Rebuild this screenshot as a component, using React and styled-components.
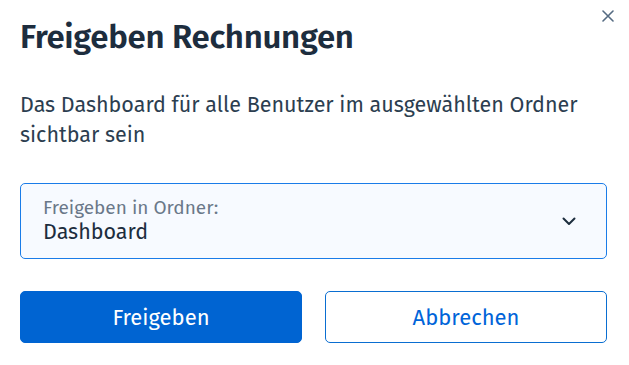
import React from "react";
import styled, { createGlobalStyle } from "styled-components";

const Global = createGlobalStyle`
  html, body { margin: 0; padding: 0; background: #ffffff; }
  body { font-family: "Fira Sans", "Open Sans", "Noto Sans", sans-serif; color: #1d2d3e; }
  * { box-sizing: border-box; }
`;

const Dialog = styled.div`
  position: relative;
  width: 629px;
  height: 365px;
  padding: 17px 22px 0 20px;
  display: flex;
  flex-direction: column;
`;

const Close = styled.button`
  position: absolute;
  top: 9px;
  right: 14px;
  width: 14px;
  height: 14px;
  padding: 0;
  border: none;
  background: transparent;
  display: flex;
  align-items: center;
  justify-content: center;
  cursor: pointer;
`;

const Title = styled.h1`
  margin: 0;
  font-size: 33px;
  line-height: 40px;
  font-weight: 600;
  color: #1d2d3e;
  letter-spacing: -0.3px;
`;

const Text = styled.p`
  margin: 32.5px 0 0 0;
  font-size: 21.5px;
  line-height: 30px;
  color: #2c3e50;
`;

const Select = styled.div`
  margin-top: 33.5px;
  height: 76px;
  border: 1px solid #1a7ce8;
  border-radius: 5px;
  background: #f7faff;
  display: flex;
  align-items: center;
  padding: 0 30px 0 22px;
`;

const SelectText = styled.div`
  flex: 1;
  align-self: flex-start;
  padding-top: 13px;
  display: flex;
  flex-direction: column;
`;

const Label = styled.span`
  font-size: 19px;
  line-height: 22px;
  color: #6a7889;
`;

const Value = styled.span`
  font-size: 21.5px;
  line-height: 26px;
  color: #1d2d3e;
`;

const Buttons = styled.div`
  margin-top: 32px;
  display: grid;
  grid-template-columns: 1fr 1fr;
  gap: 23px;
`;

const Button = styled.button`
  height: 52px;
  border-radius: 5px;
  font-family: inherit;
  font-size: 22px;
  cursor: pointer;
  border: 1px solid ${(p) => (p.$primary ? "#0064d2" : "#0a6ed1")};
  background: ${(p) => (p.$primary ? "#0064d2" : "#ffffff")};
  color: ${(p) => (p.$primary ? "#ffffff" : "#0064d9")};
`;

export default function App() {
  return (
    <>
      <Global />
      <Dialog>
        <Close aria-label="Schließen">
          <svg width="12" height="12" viewBox="0 0 12 12">
            <path d="M1 1L11 11M11 1L1 11" stroke="#556b82" strokeWidth="1.6" strokeLinecap="round" />
          </svg>
        </Close>
        <Title>Freigeben Rechnungen</Title>
        <Text>
          Das Dashboard für alle Benutzer im ausgewählten Ordner
          <br />
          sichtbar sein
        </Text>
        <Select>
          <SelectText>
            <Label>Freigeben in Ordner:</Label>
            <Value>Dashboard</Value>
          </SelectText>
          <svg width="14" height="9" viewBox="0 0 14 9">
            <path d="M1.5 1.5L7 7L12.5 1.5" stroke="#1d2d3e" strokeWidth="2" fill="none" strokeLinecap="round" strokeLinejoin="round" />
          </svg>
        </Select>
        <Buttons>
          <Button $primary>Freigeben</Button>
          <Button>Abbrechen</Button>
        </Buttons>
      </Dialog>
    </>
  );
}
